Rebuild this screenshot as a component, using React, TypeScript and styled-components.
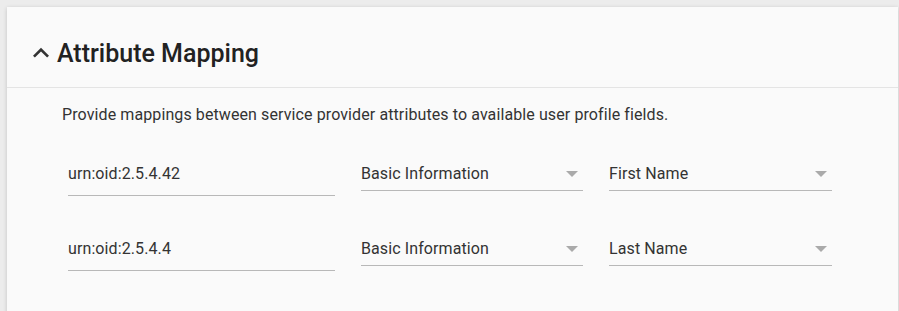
import styled, { createGlobalStyle } from "styled-components";

const GlobalStyle = createGlobalStyle`
  html, body {
    margin: 0;
    padding: 0;
    background: #ececec;
    font-family: Roboto, "Liberation Sans", sans-serif;
  }
`;

const Page = styled.div`
  padding: 7px 1px 0 7px;
  height: 311px;
  box-sizing: border-box;
  overflow: hidden;
`;

const Card = styled.section`
  background: #fafafa;
  box-shadow: 0 1px 4px rgba(0, 0, 0, 0.18);
  min-height: 320px;
`;

const Header = styled.div`
  display: flex;
  align-items: center;
  gap: 0;
  height: 81px;
  padding: 12px 0 0 18px;
  border-bottom: 1px solid #e4e4e4;
  box-sizing: border-box;
`;

const Title = styled.h2`
  margin: 0;
  font-size: 25px;
  font-weight: 500;
  color: #222;
`;

const Body = styled.div`
  padding: 17px 0 0 55px;
`;

const Description = styled.p`
  margin: 0 0 31px;
  font-size: 16px;
  color: #333;
  line-height: 20px;
  letter-spacing: 0.1px;
`;

const Row = styled.div`
  display: flex;
  align-items: flex-start;
  gap: 26px;
  padding-left: 6px;
  margin-bottom: 35px;
  letter-spacing: 0.1px;
`;

const TextField = styled.div`
  width: 267px;
  height: 40px;
  border-bottom: 1px solid #b8b8b8;
  display: flex;
  align-items: center;
  padding-bottom: 4px;
  box-sizing: border-box;
  font-size: 16px;
  color: #333;
`;

const Select = styled.div<{ $width: number }>`
  width: ${(p) => p.$width}px;
  height: 35px;
  border-bottom: 1px solid #b8b8b8;
  display: flex;
  align-items: center;
  justify-content: space-between;
  padding-top: 1px;
  box-sizing: border-box;
  font-size: 16px;
  color: #333;
`;

const Arrow = styled.span`
  width: 0;
  height: 0;
  margin-right: 5px;
  border-left: 6px solid transparent;
  border-right: 6px solid transparent;
  border-top: 6px solid #aaa;
`;

const Chevron = () => (
  <svg width="32" height="32" viewBox="0 0 24 24">
    <path d="M7.41 15.41L12 10.83l4.59 4.58L18 14l-6-6-6 6z" fill="#333" />
  </svg>
);

const rows = [
  { oid: "urn:oid:2.5.4.42", group: "Basic Information", field: "First Name" },
  { oid: "urn:oid:2.5.4.4", group: "Basic Information", field: "Last Name" },
];

export default function App() {
  return (
    <>
      <GlobalStyle />
      <Page>
        <Card>
          <Header>
            <Chevron />
            <Title>Attribute Mapping</Title>
          </Header>
          <Body>
            <Description>
              Provide mappings between service provider attributes to available user profile fields.
            </Description>
            {rows.map((r) => (
              <Row key={r.oid}>
                <TextField>{r.oid}</TextField>
                <Select $width={222}>
                  {r.group}
                  <Arrow />
                </Select>
                <Select $width={223}>
                  {r.field}
                  <Arrow />
                </Select>
              </Row>
            ))}
          </Body>
        </Card>
      </Page>
    </>
  );
}
